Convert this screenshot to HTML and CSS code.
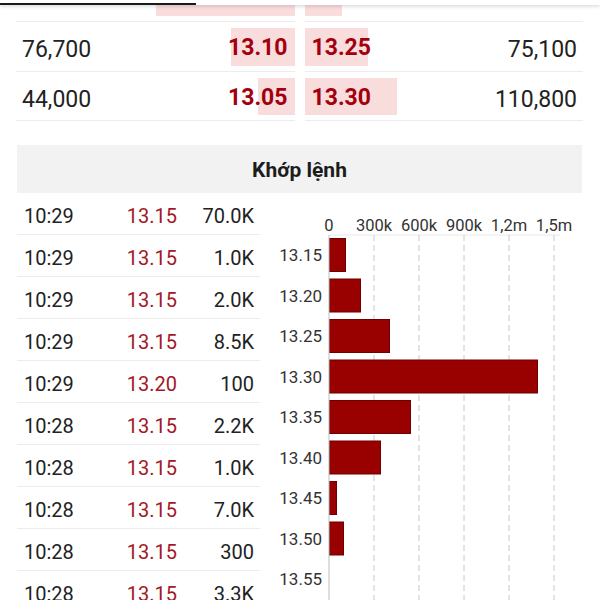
FILE: index.html
```html
<!DOCTYPE html>
<html lang="vi">
<head>
    <meta charset="UTF-8">
    <meta name="viewport" content="width=device-width, initial-scale=1.0">
    <title>Khớp lệnh</title>
    <link rel="stylesheet" href="styles.css">
</head>
<body>
    <div class="tab-bar"><div class="tab-indicator"></div></div>

    <div class="book">
        <div class="book-side">
            <div class="book-row">
                <span class="qty"></span>
                <span class="price bid"><span class="depth" style="width:139px"></span></span>
            </div>
            <div class="book-row">
                <span class="qty">76,700</span>
                <span class="price bid"><span class="depth" style="width:64px"></span><b>13.10</b></span>
            </div>
            <div class="book-row">
                <span class="qty">44,000</span>
                <span class="price bid"><span class="depth" style="width:37px"></span><b>13.05</b></span>
            </div>
        </div>
        <div class="book-side">
            <div class="book-row">
                <span class="price ask"><span class="depth" style="width:37px"></span></span>
                <span class="qty"></span>
            </div>
            <div class="book-row">
                <span class="price ask"><span class="depth" style="width:63px"></span><b>13.25</b></span>
                <span class="qty">75,100</span>
            </div>
            <div class="book-row">
                <span class="price ask"><span class="depth" style="width:92px"></span><b>13.30</b></span>
                <span class="qty">110,800</span>
            </div>
        </div>
    </div>

    <div class="section-title">Khớp lệnh</div>

    <div class="matched">
        <div class="trades">
            <div class="trade"><span>10:29</span><span class="t-price">13.15</span><span class="t-vol">70.0K</span></div>
            <div class="trade"><span>10:29</span><span class="t-price">13.15</span><span class="t-vol">1.0K</span></div>
            <div class="trade"><span>10:29</span><span class="t-price">13.15</span><span class="t-vol">2.0K</span></div>
            <div class="trade"><span>10:29</span><span class="t-price">13.15</span><span class="t-vol">8.5K</span></div>
            <div class="trade"><span>10:29</span><span class="t-price">13.20</span><span class="t-vol">100</span></div>
            <div class="trade"><span>10:28</span><span class="t-price">13.15</span><span class="t-vol">2.2K</span></div>
            <div class="trade"><span>10:28</span><span class="t-price">13.15</span><span class="t-vol">1.0K</span></div>
            <div class="trade"><span>10:28</span><span class="t-price">13.15</span><span class="t-vol">7.0K</span></div>
            <div class="trade"><span>10:28</span><span class="t-price">13.15</span><span class="t-vol">300</span></div>
            <div class="trade"><span>10:28</span><span class="t-price">13.15</span><span class="t-vol">3.3K</span></div>
        </div>

        <svg class="chart" width="322" height="410" viewBox="0 0 322 410">
            <g class="x-labels">
                <text x="69" y="38">0</text>
                <text x="114" y="38">300k</text>
                <text x="159" y="38">600k</text>
                <text x="204" y="38">900k</text>
                <text x="249" y="38">1,2m</text>
                <text x="294" y="38">1,5m</text>
            </g>
            <line class="top-line" x1="69" y1="42" x2="300" y2="42"/>
            <g class="grid">
                <line x1="114" y1="42" x2="114" y2="410"/>
                <line x1="159" y1="42" x2="159" y2="410"/>
                <line x1="204" y1="42" x2="204" y2="410"/>
                <line x1="249" y1="42" x2="249" y2="410"/>
                <line x1="294" y1="42" x2="294" y2="410"/>
            </g>
            <g class="bars">
                <rect x="69.5" y="45.5" width="16" height="33"/>
                <rect x="69.5" y="86" width="31" height="33"/>
                <rect x="69.5" y="126.5" width="60" height="33"/>
                <rect x="69.5" y="167" width="208" height="33"/>
                <rect x="69.5" y="207.5" width="81" height="33"/>
                <rect x="69.5" y="248" width="51" height="33"/>
                <rect x="69.5" y="288.5" width="7" height="33"/>
                <rect x="69.5" y="329" width="14" height="33"/>
            </g>
            <line class="axis" x1="69" y1="42" x2="69" y2="410"/>
            <g class="y-labels">
                <text x="62" y="68">13.15</text>
                <text x="62" y="108.5">13.20</text>
                <text x="62" y="149">13.25</text>
                <text x="62" y="189.5">13.30</text>
                <text x="62" y="230">13.35</text>
                <text x="62" y="270.5">13.40</text>
                <text x="62" y="311">13.45</text>
                <text x="62" y="351.5">13.50</text>
                <text x="62" y="392">13.55</text>
            </g>
        </svg>
    </div>
</body>
</html>
```

FILE: styles.css
```css
body {
    margin: 0;
    font-family: Roboto, Arial, sans-serif;
    color: #222;
    background-color: #fff;
    overflow: hidden;
}

.tab-bar {
    position: fixed;
    top: 0;
    left: 0;
    right: 0;
    height: 5px;
    background-color: #fff;
    box-shadow: 0 1px 4px rgba(0, 0, 0, 0.18);
    z-index: 2;
}

    .tab-indicator {
        position: absolute;
        left: 0;
        bottom: 0;
        width: 196px;
        height: 2px;
        background-color: #1a1a1a;
    }

.book {
    display: grid;
    grid-template-columns: 1fr 1fr;
    gap: 10px;
    margin-top: -27.3px;
    padding: 0 17px 0 16px;
}

.book-row {
    display: flex;
    justify-content: space-between;
    align-items: stretch;
    height: 49.5px;
    box-sizing: border-box;
    border-bottom: 1px solid #ececec;
    font-size: 23px;
}

.qty {
    display: flex;
    align-items: center;
    padding: 7px 6px 0;
}

.price {
    position: relative;
    display: flex;
    align-items: center;
    margin: 6px 0 5px;
    padding: 2px 7px 0;
    color: #a3000f;
}

    .price b {
        position: relative;
        font-weight: 700;
    }

    .price.bid {
        justify-content: flex-end;
    }

.depth {
    position: absolute;
    top: 0;
    bottom: 0;
    background-color: #f9dcdc;
}

.bid .depth {
    right: 0;
}

.ask .depth {
    left: 0;
}

.section-title {
    margin: 24px 18px 0 17px;
    height: 48px;
    line-height: 50px;
    background-color: #f2f2f2;
    text-align: center;
    font-size: 21px;
    font-weight: 700;
    color: #1c1c1c;
}

.matched {
    display: flex;
    padding-left: 17px;
}

.trades {
    width: 243px;
}

.trade {
    display: grid;
    grid-template-columns: 1fr 72px 77px;
    align-items: center;
    height: 42px;
    box-sizing: border-box;
    padding: 5px 6px 0 7px;
    border-bottom: 1px solid #ececec;
    font-size: 20px;
}

    .trade span {
        text-align: right;
    }

        .trade span:first-child {
            text-align: left;
        }

.t-price {
    color: #a31826;
}

.chart {
    display: block;
    flex-shrink: 0;
}

    .chart text {
        font-family: Roboto, Arial, sans-serif;
        font-size: 16.5px;
        fill: #333;
    }

.x-labels text {
    text-anchor: middle;
}

.y-labels text {
    text-anchor: end;
    font-size: 17px;
}

.top-line {
    stroke: #e8e8e8;
    stroke-width: 1;
}

.grid line {
    stroke: #c8c8c8;
    stroke-width: 1;
    stroke-dasharray: 6 4;
}

.axis {
    stroke: #bdbdbd;
    stroke-width: 1;
}

.bars rect {
    fill: #990000;
    stroke: #6f0000;
    stroke-width: 1;
}
```
